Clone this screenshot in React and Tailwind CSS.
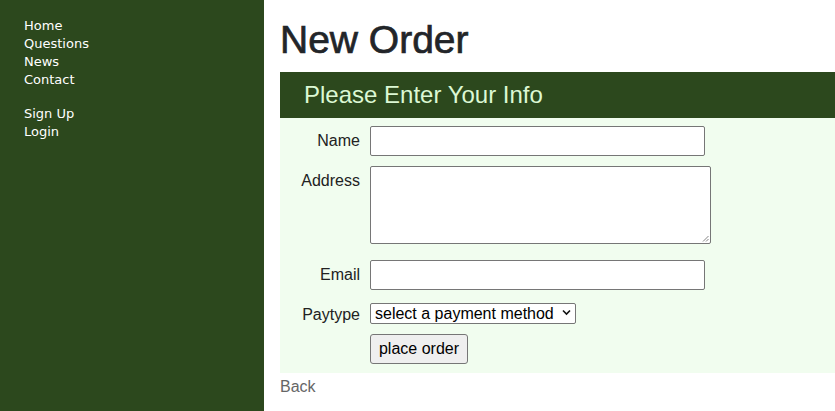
import React from 'react';

const navTop = ['Home', 'Questions', 'News', 'Contact'];
const navBottom = ['Sign Up', 'Login'];

const Label = ({ children, className = '' }) => (
  <label className={`w-[80px] mr-[10px] text-right text-[16px] leading-[24px] text-[#222] ${className}`}>
    {children}
  </label>
);

const App = () => {
  return (
    <div className="flex min-h-[411px] w-full bg-white">
      {/* Sidebar */}
      <nav className="w-[264px] shrink-0 bg-[#2c481d] pl-[24px] pt-[17px] font-['DejaVu_Sans',Verdana,sans-serif] text-[13px] leading-[18px] text-white">
        <ul>
          {navTop.map((item) => (
            <li key={item}>{item}</li>
          ))}
        </ul>
        <ul className="mt-[16px]">
          {navBottom.map((item) => (
            <li key={item}>{item}</li>
          ))}
        </ul>
      </nav>

      {/* Main */}
      <main className="flex-1 pl-[16px] pt-[16px] font-['Liberation_Sans',Arial,sans-serif]">
        <h1 className="text-[39px] leading-[48px] text-[#222529] [-webkit-text-stroke:0.7px_#222529] mb-[8px]">
          New Order
        </h1>

        <div className="bg-[#2c481d] h-[46px] flex items-center pl-[24px]">
          <h2 className="text-[24px] leading-[28px] text-[#dcf8d4]">Please Enter Your Info</h2>
        </div>

        <form className="bg-[#f1fdef] pt-[8px] pb-[9px]" onSubmit={(e) => e.preventDefault()}>
          <div className="flex items-center">
            <Label>Name</Label>
            <input
              type="text"
              className="w-[335px] h-[30px] bg-white border border-[#767676] rounded-[2px] px-2 text-[16px]"
            />
          </div>

          <div className="flex items-start mt-[10px]">
            <Label className="pt-[3px]">Address</Label>
            <div className="relative">
              <textarea className="block w-[341px] h-[78px] bg-white border border-[#767676] rounded-[2px] px-2 resize-none" />
              <svg className="absolute right-[2px] bottom-[2px]" width="7" height="7" viewBox="0 0 7 7">
                <path d="M6.5 1 L1 6.5 M6.5 4 L4 6.5" stroke="#777" strokeWidth="0.9" />
              </svg>
            </div>
          </div>

          <div className="flex items-center mt-[16px]">
            <Label>Email</Label>
            <input
              type="email"
              className="w-[335px] h-[30px] bg-white border border-[#767676] rounded-[2px] px-2 text-[16px]"
            />
          </div>

          <div className="flex items-start mt-[12px] h-[21px]">
            <Label className="pt-[1px] h-[21px]">Paytype</Label>
            <div className="relative">
              <select className="appearance-none w-[206px] h-[21px] bg-white border border-[#767676] rounded-[2px] pl-[4px] text-[16px] leading-[19px] text-black">
                <option>select a payment method</option>
              </select>
              <svg className="pointer-events-none absolute right-[5px] top-[7px]" width="9" height="7" viewBox="0 0 9 7">
                <path d="M1 1.5 L4.5 5 L8 1.5" fill="none" stroke="#111" strokeWidth="1.6" />
              </svg>
            </div>
          </div>

          <div className="flex mt-[11px]">
            <div className="w-[80px] mr-[10px]" />
            <button
              type="submit"
              className="w-[98px] h-[30px] bg-[#efefef] border border-[#767676] rounded-[3px] text-[16px] text-black"
            >
              place order
            </button>
          </div>
        </form>

        <a href="#" className="block mt-[2px] text-[16px] leading-[24px] text-[#666]">
          Back
        </a>
      </main>
    </div>
  );
};

export default App;
